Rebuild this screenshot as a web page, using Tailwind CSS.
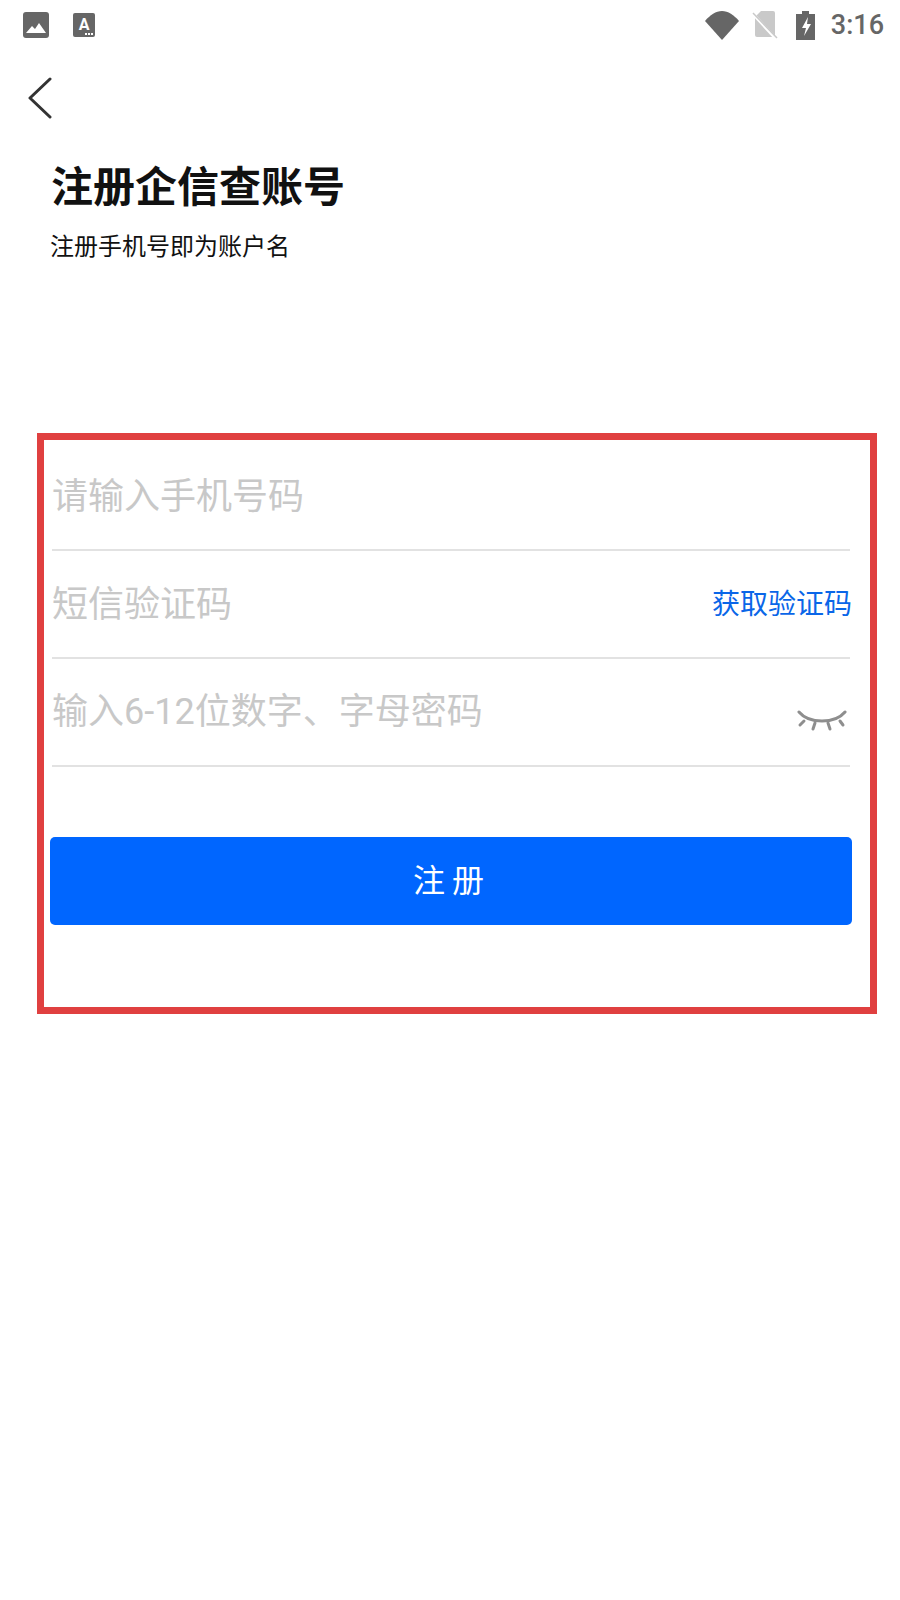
<!DOCTYPE html>
<html lang="zh-CN">
<head>
  <meta charset="UTF-8">
  <meta name="viewport" content="width=device-width, initial-scale=1.0">
  <title>注册企信查账号</title>
  <script src="https://cdn.jsdelivr.net/npm/@tailwindcss/browser@4"></script>
</head>
<body class="bg-white w-[900px] h-[1600px] overflow-hidden font-['Roboto','Noto_Sans_CJK_SC',sans-serif]">
  <!-- status bar -->
  <div class="h-[50px] flex items-center justify-between pl-[23px] pr-[16px]">
    <div class="flex items-center gap-[24px]">
      <svg class="w-[26px] h-[26px]" viewBox="0 0 26 26">
        <rect width="26" height="26" rx="3" fill="#666"/>
        <path d="M3 21l6-7 3 3 4-6 7 10z" fill="#fff"/>
      </svg>
      <div class="relative w-[22px] h-[24px] rounded-[2px] bg-[#666] text-white text-[16px] leading-[23px] font-bold text-center">A
        <div class="absolute right-[2px] bottom-[2px] flex gap-[1px]">
          <span class="w-[2px] h-[2px] bg-white"></span><span class="w-[2px] h-[2px] bg-white"></span><span class="w-[2px] h-[2px] bg-white"></span>
        </div>
      </div>
    </div>
    <div class="flex items-center">
      <svg class="w-[34px] h-[29px]" viewBox="0 0 34 29"><path d="M0 10C5 4 11 0 17 0s12 4 17 10L17 29z" fill="#666"/></svg>
      <svg class="w-[26px] h-[28px] ml-[13px]" viewBox="0 0 26 28">
        <path d="M9 0h12a2 2 0 0 1 2 2v24H5a2 2 0 0 1-2-2V6z" fill="#c9c9c9"/>
        <path d="M2 4l23 25" stroke="#fff" stroke-width="3"/>
        <path d="M1 2l24 25" stroke="#c9c9c9" stroke-width="1.5"/>
      </svg>
      <svg class="w-[19px] h-[29px] ml-[18px]" viewBox="0 0 19 29">
        <path d="M6 0h7v3h6v26H0V3h6z" fill="#666"/>
        <path d="M12 6l-6 11h4l-2 8 7-12h-4z" fill="#fff"/>
      </svg>
      <span class="ml-[16px] text-[27px] leading-none font-medium text-[#666]">3:16</span>
    </div>
  </div>

  <!-- back arrow -->
  <div class="h-[96px] pl-[27px] flex items-center">
    <svg class="w-[26px] h-[42px]" viewBox="0 0 26 42" fill="none" stroke="#333" stroke-width="3" stroke-linecap="round" stroke-linejoin="round">
      <path d="M23 2L3 21l20 19"/>
    </svg>
  </div>

  <!-- heading -->
  <div class="pl-[51px] pt-[14px]">
    <h1 class="text-[42px] leading-[56px] font-bold text-[#111]">注册企信查账号</h1>
    <p class="mt-[15px] -ml-[1px] text-[24px] leading-[32px] text-[#111]">注册手机号即为账户名</p>
  </div>

  <!-- highlighted form -->
  <div class="mt-[170px] ml-[37px] w-[840px] h-[581px] border-[7px] border-[#e04040] pl-[8px] pr-[20px]">
    <div class="h-[111px] pt-[34px] border-b-2 border-[#e2e2e2] text-[36px] leading-[46px] text-[#c8c8c8]">请输入手机号码</div>
    <div class="h-[108px] flex justify-between pt-[31px] border-b-2 border-[#e2e2e2]">
      <span class="text-[36px] leading-[46px] text-[#c8c8c8]">短信验证码</span>
      <span class="-mr-[2px] text-[28px] leading-[46px] text-[#0a66e8]">获取验证码</span>
    </div>
    <div class="h-[108px] flex justify-between pt-[30px] border-b-2 border-[#e2e2e2]">
      <span class="text-[36px] leading-[46px] text-[#c8c8c8]">输入6-12位数字、字母密码</span>
      <svg class="w-[50px] h-[24px] mt-[20px] mr-[3px]" viewBox="0 0 50 24" fill="none" stroke="#8e8e8e" stroke-width="3" stroke-linecap="round">
        <path d="M2 3C12 15 38 15 48 3"/>
        <path d="M7 12l-4 4M18 14l-2 6M31 14l2 6M43 12l3 4"/>
      </svg>
    </div>
    <button class="mt-[70px] -ml-[2px] w-[802px] h-[88px] pl-[2px] rounded-[5px] bg-[#0066ff] text-white text-[32px] tracking-[7px]">注册</button>
  </div>
</body>
</html>
